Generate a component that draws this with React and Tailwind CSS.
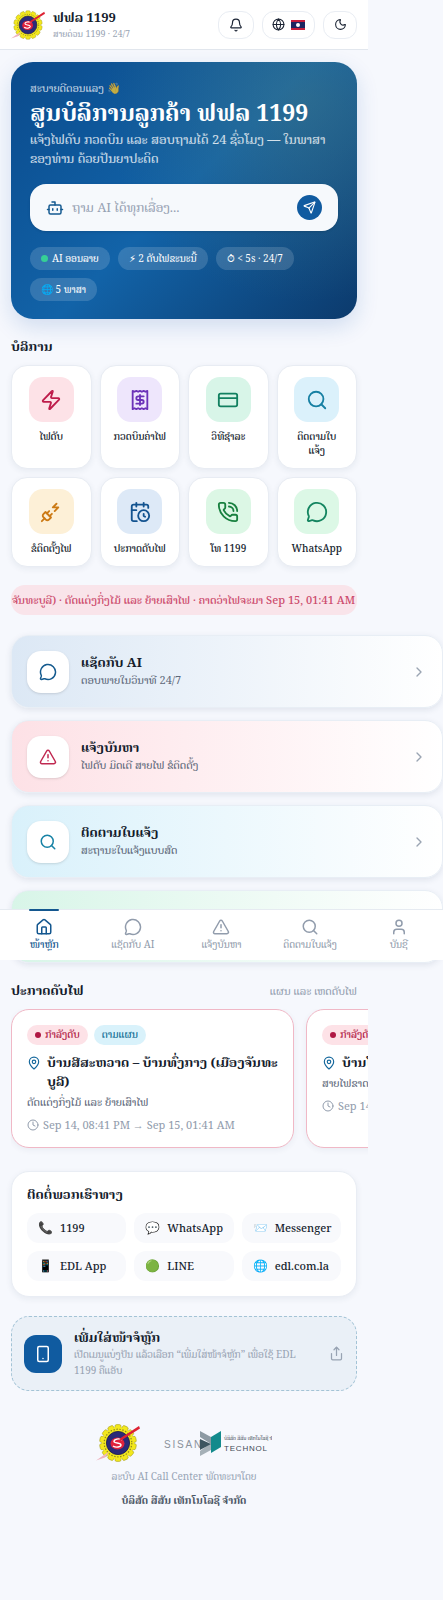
import {
  Bell, Globe, Moon, Bot, Send, Zap, CreditCard, Search, CalendarClock, PhoneCall,
  MessageCircle, TriangleAlert, ChevronRight, House, User, MapPin, Clock, Smartphone, Share,
} from "lucide-react";

const teeth = Array.from({ length: 14 }, (_, i) => (i * 360) / 14);

function EdlLogo({ className }) {
  return (
    <svg viewBox="0 0 44 40" className={className} aria-hidden="true">
      <g fill="#f3e81c" stroke="#a8a020" strokeWidth="0.6">
        {teeth.map((a) => (
          <rect key={a} x="19" y="1.6" width="6" height="6" rx="1.6" transform={`rotate(${a} 22 20)`} />
        ))}
      </g>
      <circle cx="22" cy="20" r="16" fill="#f3e81c" />
      <circle cx="22" cy="20" r="13.8" fill="none" stroke="#8a8420" strokeWidth="1.2" strokeDasharray="1.4 1.6" />
      <circle cx="22" cy="20" r="11.6" fill="#2b2a78" stroke="#1c1a4a" strokeWidth="0.8" />
      <ellipse cx="21.5" cy="20.5" rx="7" ry="6" fill="#e0213c" />
      <path d="M26 17c-3-2-8-1-8 1.5 0 2 7 1 7 3.500 0 2-5 3-8 1" stroke="#fff" strokeWidth="1.4" fill="none" />
      <path d="M23 16L43 3l1 2.5-19 12z" fill="#dd2233" />
      <path d="M0 37.500l13-9-4 6z" fill="#efb3c0" />
    </svg>
  );
}

function SisanLogo() {
  return (
    <svg viewBox="0 0 108 32" className="h-8 w-[108px]" role="img" aria-label="SISAN TECHNOLOGY">
      <text x="0" y="21" fontFamily="Liberation Sans, sans-serif" fontSize="10" letterSpacing="1.8" fill="#8b929c">SISAN</text>
      <path d="M36 4l11 6v7L36 10z" fill="#8d9aa3" />
      <path d="M36 29l11-6v-7L36 24z" fill="#a5b0b7" />
      <path d="M36 12l11 5-11 6z" fill="#3d5560" />
      <path d="M47 10l10-6v16L47 26z" fill="#138a8c" />
      <text x="60" y="13" fontFamily="Noto Serif Lao, Noto Sans Lao, sans-serif" fontSize="5" fill="#3f4a55">ບໍລິສັດ ສີສັນ ເທັກໂນໂລຊີ ຈຳ</text>
      <text x="60" y="24" fontFamily="Liberation Sans, sans-serif" fontSize="8" letterSpacing="0.8" fill="#3f4a55">TECHNOL</text>
    </svg>
  );
}

function PlugZap({ className }) {
  return (
    <svg viewBox="0 0 24 24" className={className} fill="none" stroke="currentColor" strokeWidth="2" strokeLinecap="round" strokeLinejoin="round">
      <path d="M6.3 20.3a2.4 2.4 0 0 0 3.4 0L12 18l-6-6-2.3 2.3a2.4 2.4 0 0 0 0 3.4Z" />
      <path d="m2 22 3-3" />
      <path d="M7.5 13.5 10 11" />
      <path d="M10.5 16.5 13 14" />
      <path d="m18 3-4 4h6l-4 4" />
    </svg>
  );
}

function ReceiptDollar({ className }) {
  return (
    <svg viewBox="0 0 24 24" className={className} fill="none" stroke="currentColor" strokeWidth="2" strokeLinecap="round" strokeLinejoin="round">
      <path d="M4 2v20l2-1 2 1 2-1 2 1 2-1 2 1 2-1 2 1V2l-2 1-2-1-2 1-2-1-2 1-2-1-2 1Z" />
      <path d="M16 8h-6a2 2 0 1 0 0 4h4a2 2 0 1 1 0 4H8" />
      <path d="M12 17.5v-11" />
    </svg>
  );
}

const services = [
  { label: "ໄຟດັບ", Icon: Zap, tone: "bg-[#fde2e7] text-[#be1c4b]" },
  { label: "ກວດບິນຄ່າໄຟ", Icon: ReceiptDollar, tone: "bg-[#eee6fc] text-[#6b32b8]" },
  { label: "ວິທີຊຳລະ", Icon: CreditCard, tone: "bg-[#d8f5e8] text-[#128060]" },
  { label: "ຕິດຕາມໃບ\nແຈ້ງ", Icon: Search, tone: "bg-[#dbf1fb] text-[#1780a3]" },
  { label: "ຂໍຕິດຕັ້ງໄຟ", Icon: PlugZap, tone: "bg-[#fdf0d7] text-[#cc7a15]" },
  { label: "ປະກາດດັບໄຟ", Icon: CalendarClock, tone: "bg-[#dde9f7] text-[#135390]" },
  { label: "ໂທ 1199", Icon: PhoneCall, tone: "bg-[#dcf7e5] text-[#18803f]" },
  { label: "WhatsApp", Icon: MessageCircle, tone: "bg-[#dcf8e6] text-[#148560]" },
];

const actions = [
  { title: "ແຊັດກັບ AI", sub: "ຕອບພາຍໃນວິນາທີ 24/7", Icon: MessageCircle, bg: "from-[#dce8f5]", fg: "text-[#145a8e]" },
  { title: "ແຈ້ງບັນຫາ", sub: "ໄຟດັບ ມິດເຕີ ສາຍໄຟ ຂໍຕິດຕັ້ງ", Icon: TriangleAlert, bg: "from-[#fde1e6]", fg: "text-[#c02850]" },
  { title: "ຕິດຕາມໃບແຈ້ງ", sub: "ສະຖານະໃບແຈ້ງແບບສົດ", Icon: Search, bg: "from-[#d9f1fb]", fg: "text-[#1782a5]" },
];

const tabs = [
  { label: "ໜ້າຫຼັກ", Icon: House, active: true },
  { label: "ແຊັດກັບ AI", Icon: MessageCircle },
  { label: "ແຈ້ງບັນຫາ", Icon: TriangleAlert },
  { label: "ຕິດຕາມໃບແຈ້ງ", Icon: Search },
  { label: "ບັນຊີ", Icon: User },
];

const outages = [
  { place: "ບ້ານສີສະຫວາດ – ບ້ານທົ່ງກາງ (ເມືອງຈັນທະ\u200Bບູລີ)", why: "ຕັດແຕ່ງກິ່ງໄມ້ ແລະ ຍ້າຍເສົາໄຟ", when: "Sep 14, 08:41 PM → Sep 15, 01:41 AM", planned: true },
  { place: "ບ້ານໂພນຕ້ອງ", why: "ສາຍໄຟຂາດ", when: "Sep 14, 09:10 PM" },
];

const contacts = [
  ["📞", "1199"], ["💬", "WhatsApp"], ["📨", "Messenger"],
  ["📱", "EDL App"], ["🟢", "LINE"], ["🌐", "edl.com.la"],
];

const chip = "flex h-[23px] items-center gap-1 rounded-full bg-white/15 px-[11px] text-[10px] leading-4";
const headBtn = "flex h-7 items-center justify-center gap-[6px] rounded-xl border border-[#e9edf3] bg-white text-[#1b2434]";
const actionCard = "flex h-[73px] items-center gap-3 rounded-[18px] border border-[#e8eef5] bg-gradient-to-r to-white px-[15px] shadow-[0_2px_6px_rgba(30,50,90,0.1)]";

export default function App() {
  return (
    <div className="min-h-screen overflow-x-hidden bg-[#f6f8fd] pb-[88px] font-['Noto_Serif_Lao','Noto_Serif','Noto_Sans_Lao',serif] text-[#141c2c]">
      <header className="flex h-[50px] max-w-[368px] items-center justify-between border-b border-[#e2e7ee] bg-white px-[11px]">
        <div className="flex items-center gap-2">
          <EdlLogo className="h-[34px] w-[34px]" />
          <div>
            <p className="text-[13px] leading-[18px] font-bold">ຟຟລ 1199</p>
            <p className="text-[9px] leading-[14px] text-[#9aa5b5]">ສາຍດ່ວນ 1199 · 24/7</p>
          </div>
        </div>
        <div className="flex items-center gap-2">
          <button aria-label="Notifications" className={`${headBtn} w-9`}><Bell className="size-[14px]" /></button>
          <button aria-label="Language" className={`${headBtn} w-[53px]`}>
            <Globe className="size-[13px]" />
            <svg viewBox="0 0 14 10" className="h-[10px] w-[14px]" aria-hidden="true">
              <path fill="#c51d3c" d="M0 0h14v10H0z" /><path fill="#1b2560" d="M0 2h14v6H0z" /><circle cx="7" cy="5" r="2" fill="#fff" />
            </svg>
          </button>
          <button aria-label="Dark mode" className={`${headBtn} w-[34px]`}><Moon className="size-[13px]" /></button>
        </div>
      </header>

      <div className="max-w-[368px] px-[11px] pt-3">
        <section className="rounded-[22px] bg-[radial-gradient(circle_at_85%_15%,rgba(80,125,120,0.4),transparent_55%),linear-gradient(135deg,#0a4a8c_0%,#1263a8_50%,#0c3a6c_100%)] px-[19px] py-[18px] text-white shadow-[0_8px_22px_rgba(20,80,170,0.16)]">
          <p className="text-[11px] leading-4 text-white/75">ສະບາຍດີຕອນແລງ 👋</p>
          <h1 className="text-[23px] leading-[34px] font-bold">ສູນບໍລິການລູກຄ້າ ຟຟລ 1199</h1>
          <p className="text-[13px] leading-[19px] text-white/80">ແຈ້ງໄຟດັບ ກວດບິນ ແລະ ສອບຖາມໄດ້ 24 ຊົ່ວໂມງ — ໃນພາສາຂອງທ່ານ ດ້ວຍປັນຍາປະດິດ</p>
          <form className="mt-4 flex h-[47px] items-center gap-2 rounded-2xl bg-[#f6f9fc] px-4 shadow-sm">
            <Bot className="size-[18px] shrink-0 text-[#145a90]" />
            <input aria-label="ຖາມ AI" placeholder="ຖາມ AI ໄດ້ທຸກເລື່ອງ..." className="h-8 min-w-0 flex-1 bg-transparent text-[13px] text-[#141c2c] outline-none placeholder:text-[#97a2b3]" />
            <button type="button" aria-label="Send" className="flex size-[25px] items-center justify-center rounded-full bg-[#105ba0] text-white"><Send className="size-[13px]" /></button>
          </form>
          <div className="mt-4 flex flex-wrap gap-2">
            <span className={chip}><span className="size-[7px] rounded-full bg-[#36cf96]" />AI ອອນລາຍ</span>
            <span className={chip}>{"⚡\uFE0E 2 ດັບໄຟຂະນະນີ້"}</span>
            <span className={chip}>{"⏱\uFE0E < 5s · 24/7"}</span>
            <span className={chip}>🌐 5 ພາສາ</span>
          </div>
        </section>

        <h2 className="mt-[18px] text-[13px] leading-5 font-bold">ບໍລິການ</h2>
        <div className="mt-2 grid grid-cols-4 gap-2">
          {services.map(({ label, Icon, tone }) => (
            <button key={label} className="flex flex-col items-center justify-start rounded-[16px] border border-[#e8ecf3] bg-white px-[10px] pt-[11px] pb-[10px] shadow-[0_2px_6px_rgba(30,50,90,0.07)]">
              <span className={`flex size-[45px] items-center justify-center rounded-[14px] ${tone}`}><Icon className="size-[22px]" /></span>
              <span className="mt-2 text-[10px] leading-[14px] font-medium whitespace-pre-line">{label}</span>
            </button>
          ))}
        </div>

        <div className="mt-[18px] flex h-[30px] items-center justify-end overflow-hidden rounded-[14px] bg-[#f9e4ea] text-[11px] font-medium text-[#cc4a6c]">
          <p className="pr-[2px] whitespace-nowrap">ຈັນທະບູລີ) · ຕັດແຕ່ງກິ່ງໄມ້ ແລະ ຍ້າຍເສົາໄຟ · ຄາດວ່າໄຟຈະມາ Sep 15, 01:41 AM</p>
        </div>
      </div>

      <div className="relative mt-5">
        <div className="flex flex-col gap-3 pl-[11px]">
          {actions.map(({ title, sub, Icon, bg, fg }) => (
            <a key={title} href="#" className={`${actionCard} ${bg}`}>
              <span className={`flex size-[42px] items-center justify-center rounded-[14px] bg-white shadow-sm ${fg}`}><Icon className="size-[18px]" /></span>
              <span className="flex-1">
                <span className="block text-[13px] leading-[18px] font-bold">{title}</span>
                <span className="block text-[11px] leading-[17px] text-[#5d6879]">{sub}</span>
              </span>
              <ChevronRight className="size-4 text-[#9aa4b2]" />
            </a>
          ))}
          <a href="#" aria-label="ໂທ 1199" className={`${actionCard} from-[#d8f5e8]`} />
        </div>
        <nav className="absolute inset-x-0 bottom-[3px] grid h-[51px] grid-cols-5 border-t border-[#e6ebf1] bg-white">
          {tabs.map(({ label, Icon, active }) => (
            <a key={label} href="#" className={`relative flex flex-col items-center pt-2 ${active ? "font-medium text-[#14578f]" : "text-[#919cac]"}`}>
              {active && <span className="absolute -top-px h-[2px] w-[30px] rounded-full bg-[#14578f]" />}
              <Icon className="size-[18px]" />
              <span className="text-[10px] leading-[18px]">{label}</span>
            </a>
          ))}
        </nav>
      </div>

      <div className="max-w-[368px] pt-[18px] pl-[11px]">
        <div className="flex items-center justify-between pr-[11px]">
          <h2 className="text-[13px] leading-5 font-bold">ປະກາດດັບໄຟ</h2>
          <span className="text-[11px] leading-5 text-[#949fb0]">ແຜນ ແລະ ເຫດດັບໄຟ</span>
        </div>
        <div className="mt-2 flex gap-3 overflow-hidden pb-2">
          {outages.map((o) => (
            <article key={o.place} className="h-[139px] w-[283px] shrink-0 rounded-[18px] border border-[#f0b8c6] bg-white pt-[15px] pr-3 pl-[15px] shadow-[0_2px_6px_rgba(30,50,90,0.06)]">
              <div className="flex h-5 gap-[6px] text-[10px] leading-5 font-medium">
                <span className="flex items-center gap-1 rounded-full bg-[#fde2e7] px-2 text-[#b01844]"><span className="size-[6px] rounded-full bg-[#b01844]" />ກຳລັງດັບ</span>
                {o.planned && <span className="rounded-full bg-[#d9f2fb] px-2 text-[#156f96]">ຕາມແຜນ</span>}
              </div>
              <h3 className="mt-2 flex gap-[6px] text-[13px] leading-[19px] font-bold"><MapPin className="mt-[3px] size-[14px] shrink-0 text-[#14679c]" />{o.place}</h3>
              <p className="mt-[2px] text-[11px] leading-[18px] text-[#5d6879]">{o.why}</p>
              <p className="mt-[6px] flex items-center gap-1 text-[11px] leading-4 whitespace-nowrap text-[#919cac]"><Clock className="size-3" />{o.when}</p>
            </article>
          ))}
        </div>
      </div>

      <div className="max-w-[368px] px-[11px] pt-[15px]">
        <section className="rounded-[18px] border border-[#e9edf4] bg-white px-[15px] pt-[13px] pb-[15px] shadow-[0_2px_6px_rgba(30,50,90,0.07)]">
          <h2 className="text-[13px] leading-5 font-bold">ຕິດຕໍ່ພວກເຮົາທາງ</h2>
          <div className="mt-2 grid grid-cols-3 gap-2">
            {contacts.map(([emoji, label]) => (
              <a key={label} href="#" className="flex h-[30px] items-center gap-2 rounded-[12px] bg-[#f8f9fc] pl-[11px] text-[11px] leading-4 font-medium"><span className="w-[14px] text-[12px]">{emoji}</span>{label}</a>
            ))}
          </div>
        </section>

        <button className="mt-[19px] flex h-[75px] w-full items-center gap-3 rounded-[18px] border border-dashed border-[#a3c3d6] bg-[#eaf0f7] px-3 text-left">
          <span className="flex size-[38px] shrink-0 items-center justify-center rounded-[12px] bg-[#105ba0] text-white"><Smartphone className="size-[18px]" /></span>
          <span className="flex-1">
            <span className="block text-[13px] leading-[19px] font-bold">ເພີ່ມໃສ່ໜ້າຈໍຫຼັກ</span>
            <span className="block text-[10px] leading-4 text-[#98a3b3]">ເປີດເມນູແບ່ງປັນ ແລ້ວເລືອກ “ເພີ່ມໃສ່ໜ້າຈໍຫຼັກ” ເພື່ອໃຊ້ EDL 1199 ຄືແອັບ</span>
          </span>
          <Share className="size-[15px] shrink-0 text-[#98a3b3]" />
        </button>

        <footer className="mt-8 flex flex-col items-center text-center">
          <div className="flex items-center gap-6"><EdlLogo className="h-[40px] w-[44px]" /><SisanLogo /></div>
          <p className="mt-1 text-[10px] leading-5 text-[#98a5b6]">ລະບົບ AI Call Center ພັດທະນາໂດຍ</p>
          <p className="mt-1 text-[10px] leading-5 font-bold text-[#4a5564]">ບໍລິສັດ ສີສັນ ເທັກໂນໂລຊີ ຈຳກັດ</p>
        </footer>
      </div>
    </div>
  );
}
